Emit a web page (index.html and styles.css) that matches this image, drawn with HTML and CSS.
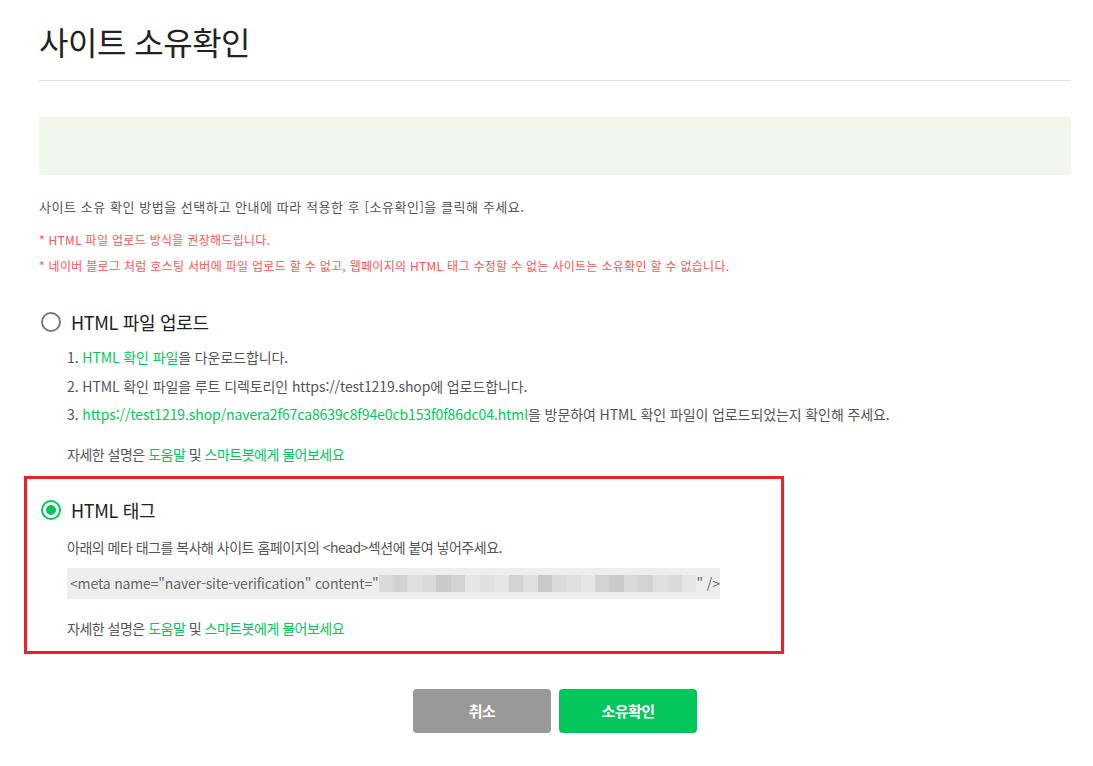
FILE: index.html
```html
<!DOCTYPE html>
<html lang="ko">
<head>
<meta charset="utf-8">
<title>사이트 소유확인</title>
<link rel="stylesheet" href="styles.css">
</head>
<body>
<div class="page">
  <header class="head">
    <h1 class="title">사이트 소유확인</h1>
  </header>
  <div class="notice-box"></div>
  <p class="intro">사이트 소유 확인 방법을 선택하고 안내에 따라 적용한 후 [소유확인]을 클릭해 주세요.</p>
  <p class="warn warn-first">* HTML 파일 업로드 방식을 권장해드립니다.</p>
  <p class="warn">* 네이버 블로그 처럼 호스팅 서버에 파일 업로드 할 수 없고, 웹페이지의 HTML 태그 수정할 수 없는 사이트는 소유확인 할 수 없습니다.</p>

  <section class="option">
    <label class="opt-head"><span class="radio"></span><span class="opt-title">HTML 파일 업로드</span></label>
    <ol class="steps">
      <li>1. <a class="lnk">HTML 확인 파일</a>을 다운로드합니다.</li>
      <li>2. HTML 확인 파일을 루트 디렉토리인 https://test1219.shop에 업로드합니다.</li>
      <li>3. <a class="lnk">https://test1219.shop/navera2f67ca8639c8f94e0cb153f0f86dc04.html</a>을 방문하여 HTML 확인 파일이 업로드되었는지 확인해 주세요.</li>
    </ol>
    <p class="help">자세한 설명은 <a class="lnk">도움말</a> 및 <a class="lnk">스마트봇에게 물어보세요</a></p>
  </section>

  <section class="option selected">
    <label class="opt-head"><span class="radio on"></span><span class="opt-title">HTML 태그</span></label>
    <p class="desc">아래의 메타 태그를 복사해 사이트 홈페이지의 &lt;head&gt;섹션에 붙여 넣어주세요.</p>
    <div class="code">&lt;meta name="naver-site-verification" content="<span class="blur"><i class="b1"></i><i class="b2"></i><i class="b3"></i><i class="b1"></i><i class="b4"></i><i class="b2"></i><i class="b0"></i><i class="b3"></i><i class="b0"></i><i class="b2"></i><i class="b3"></i><i class="b4"></i><i class="b1"></i><i class="b3"></i><i class="b0"></i><i class="b2"></i><i class="b4"></i><i class="b1"></i><i class="b2"></i><i class="b3"></i><i class="b1"></i><i class="b0"></i></span>" /&gt;</div>
    <p class="help">자세한 설명은 <a class="lnk">도움말</a> 및 <a class="lnk">스마트봇에게 물어보세요</a></p>
  </section>

  <div class="buttons">
    <button class="btn btn-cancel">취소</button>
    <button class="btn btn-ok">소유확인</button>
  </div>
</div>
</body>
</html>
```

FILE: styles.css
```css
* { box-sizing: border-box; }
html, body { margin: 0; padding: 0; background: #fff; }
body {
  font-family: "Noto Sans CJK KR", "Noto Sans", sans-serif;
  color: #555;
}
.page {
  width: 1093px;
  padding: 0 22px 0 39px;
}
.head {
  padding-top: 21px;
  padding-bottom: 19px;
  border-bottom: 1px solid #e1e1e1;
}
.title {
  margin: 0;
  font-size: 32px;
  line-height: 40px;
  font-weight: 400;
  color: #222;
  letter-spacing: -0.5px;
}
.notice-box {
  margin-top: 36px;
  height: 58px;
  background: #f1f7ea;
}
.intro {
  margin: 22px 0 0;
  font-size: 13px;
  line-height: 20px;
  color: #555;
  letter-spacing: 0.55px;
}
.warn {
  margin: 6px 0 0;
  font-size: 12px;
  line-height: 20px;
  color: #ff5454;
  letter-spacing: 0.3px;
}
.warn-first { margin-top: 13px; }
.option {
  margin-top: 33px;
}
.opt-head {
  display: flex;
  align-items: center;
  height: 26px;
  gap: 10px;
  margin-left: 2px;
}
.radio {
  width: 20px;
  height: 20px;
  border: 2px solid #7a7a7a;
  border-radius: 50%;
  flex: none;
  position: relative;
}
.radio.on { border-color: #03c75a; }
.radio.on::after {
  content: "";
  position: absolute;
  left: 3px; top: 3px;
  width: 10px; height: 10px;
  border-radius: 50%;
  background: #03c75a;
}
.opt-title {
  font-size: 18px;
  color: #222;
  letter-spacing: -0.3px;
}
.steps {
  list-style: none;
  margin: 8px 0 0;
  padding: 0 0 0 28px;
}
.steps li {
  font-size: 14px;
  line-height: 28.5px;
  color: #555;
  letter-spacing: -0.1px;
}
.lnk { color: #03c75a; text-decoration: none; }
.help {
  margin: 11px 0 0 28px;
  font-size: 14px;
  line-height: 28px;
  color: #555;
  letter-spacing: -0.5px;
}
.option.selected {
  margin: 8px 0 0 -15px;
  width: 760px;
  border: 3px solid #e8232b;
  padding: 18px 0 9px 12px;
}
.desc {
  margin: 10px 0 0 28px;
  font-size: 14px;
  line-height: 28px;
  color: #555;
  letter-spacing: -0.5px;
}
.code {
  margin: 7px 0 0 28px;
  width: 653px;
  height: 31px;
  background: #eeeeee;
  font-size: 14px;
  line-height: 31px;
  padding-left: 3px;
  color: #666;
  letter-spacing: -0.15px;
  white-space: nowrap;
}
.blur {
  display: inline-flex;
  vertical-align: middle;
  height: 17px;
  width: 318px;
  margin-top: -3px;
}
.blur i { flex: 1; height: 100%; }
.b0 { background: #e6e6e6; }
.b1 { background: #dadada; }
.b2 { background: #d2d2d2; }
.b3 { background: #dfdfdf; }
.b4 { background: #cacaca; }
.option.selected .help { margin: 15px 0 0 28px; }
.buttons {
  display: flex;
  justify-content: center;
  gap: 8px;
  margin-top: 35px;
}
.btn {
  width: 138px;
  height: 44px;
  border: 0;
  border-radius: 4px;
  color: #fff;
  font-family: inherit;
  font-size: 15px;
  font-weight: 700;
  letter-spacing: -0.5px;
}
.btn-cancel { background: #999999; }
.btn-ok { background: #03c75a; }
```
